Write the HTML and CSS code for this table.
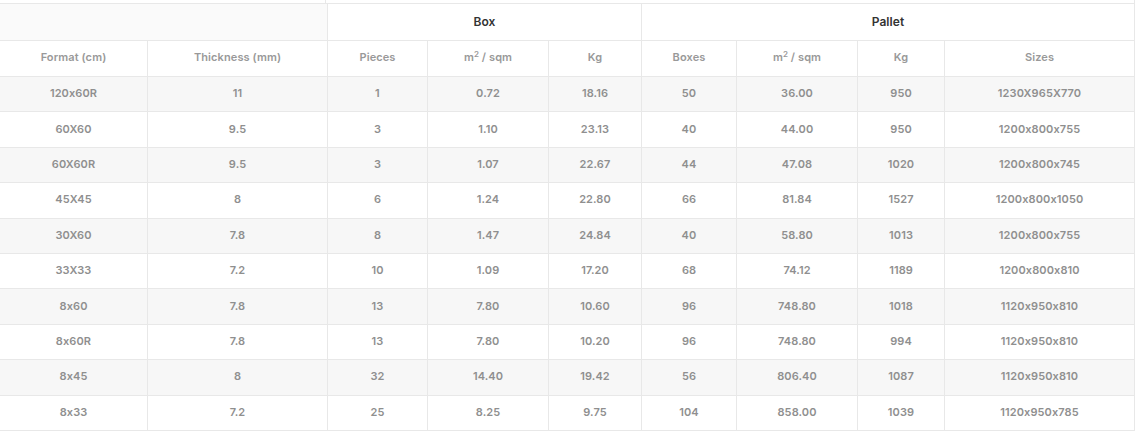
FILE: index.html
```html
<!DOCTYPE html>
<html lang="en">
<head>
<meta charset="utf-8">
<title>Packing table</title>
<link rel="stylesheet" href="styles.css">
</head>
<body>
<div class="prev-row"><div class="prev-a"></div><div class="prev-b"></div></div>
<table class="pack">
  <colgroup>
    <col style="width:148px"><col style="width:180px"><col style="width:100px"><col style="width:121px"><col style="width:93px"><col style="width:95px"><col style="width:121px"><col style="width:87px"><col style="width:190px">
  </colgroup>
  <thead>
    <tr class="group">
      <th colspan="2" class="blank"></th>
      <th colspan="3">Box</th>
      <th colspan="4">Pallet</th>
    </tr>
    <tr class="sub">
      <th>Format (cm)</th>
      <th>Thickness (mm)</th>
      <th>Pieces</th>
      <th>m<sup>2</sup> / sqm</th>
      <th>Kg</th>
      <th>Boxes</th>
      <th>m<sup>2</sup> / sqm</th>
      <th>Kg</th>
      <th>Sizes</th>
    </tr>
  </thead>
  <tbody>
    <tr><td>120x60R</td><td>11</td><td>1</td><td>0.72</td><td>18.16</td><td>50</td><td>36.00</td><td>950</td><td>1230X965X770</td></tr>
    <tr><td>60X60</td><td>9.5</td><td>3</td><td>1.10</td><td>23.13</td><td>40</td><td>44.00</td><td>950</td><td>1200x800x755</td></tr>
    <tr><td>60X60R</td><td>9.5</td><td>3</td><td>1.07</td><td>22.67</td><td>44</td><td>47.08</td><td>1020</td><td>1200x800x745</td></tr>
    <tr><td>45X45</td><td>8</td><td>6</td><td>1.24</td><td>22.80</td><td>66</td><td>81.84</td><td>1527</td><td>1200x800x1050</td></tr>
    <tr><td>30X60</td><td>7.8</td><td>8</td><td>1.47</td><td>24.84</td><td>40</td><td>58.80</td><td>1013</td><td>1200x800x755</td></tr>
    <tr><td>33X33</td><td>7.2</td><td>10</td><td>1.09</td><td>17.20</td><td>68</td><td>74.12</td><td>1189</td><td>1200x800x810</td></tr>
    <tr><td>8x60</td><td>7.8</td><td>13</td><td>7.80</td><td>10.60</td><td>96</td><td>748.80</td><td>1018</td><td>1120x950x810</td></tr>
    <tr><td>8x60R</td><td>7.8</td><td>13</td><td>7.80</td><td>10.20</td><td>96</td><td>748.80</td><td>994</td><td>1120x950x810</td></tr>
    <tr><td>8x45</td><td>8</td><td>32</td><td>14.40</td><td>19.42</td><td>56</td><td>806.40</td><td>1087</td><td>1120x950x810</td></tr>
    <tr><td>8x33</td><td>7.2</td><td>25</td><td>8.25</td><td>9.75</td><td>104</td><td>858.00</td><td>1039</td><td>1120x950x785</td></tr>
  </tbody>
</table>
</body>
</html>
```
FILE: styles.css
```css
html, body {
  margin: 0;
  padding: 0;
  background: #ffffff;
}
body {
  font-family: Inter, "Open Sans", "Liberation Sans", sans-serif;
  font-feature-settings: "calt" 0;
}
.prev-row {
  display: flex;
  height: 3px;
  width: 1135px;
}
.prev-a {
  width: 325px;
  border-right: 1px solid #e8e8e8;
}
.prev-b {
  flex: 1;
  border-right: 1px solid #e8e8e8;
}
.pack {
  border-collapse: separate;
  border-spacing: 0;
  table-layout: fixed;
  width: 1135px;
  border-top: 1px solid #e8e8e8;
}
.pack th, .pack td {
  border-right: 1px solid #e8e8e8;
  border-bottom: 1px solid #e8e8e8;
  padding: 0 4px 1px;
  text-align: center;
  font-size: 11px;
  font-weight: 600;
  color: #999999;
  white-space: nowrap;
  letter-spacing: 0.1px;
}
.pack .group th {
  height: 34px;
  padding-bottom: 2px;
  font-size: 12px;
  color: #333333;
  background: #ffffff;
}
.pack .group th.blank {
  background: #fafafa;
}
.pack .sub th {
  height: 32px;
  padding-bottom: 3px;
  background: #ffffff;
}
.pack sup {
  font-size: 8px;
  line-height: 0;
  vertical-align: 4px;
}
.pack tbody tr {
  height: 35.4px;
}
.pack tbody td {
  padding-bottom: 2px;
  color: #8f8f8f;
}
.pack tbody tr:nth-child(odd) td {
  background: #f7f7f7;
}
```
